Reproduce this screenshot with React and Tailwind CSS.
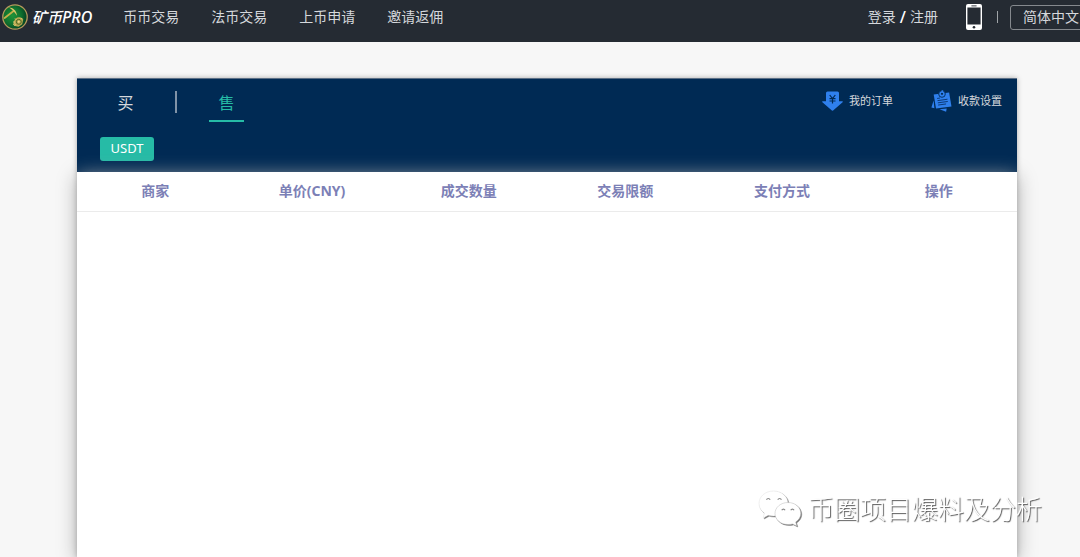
import React, { useState } from "react";

const NAV = ["币币交易", "法币交易", "上币申请", "邀请返佣"];
const COLUMNS = ["商家", "单价(CNY)", "成交数量", "交易限额", "支付方式", "操作"];

function CoinLogo() {
  return (
    <svg viewBox="0 0 26 26" className="size-[26px] shrink-0" aria-hidden="true">
      <defs>
        <radialGradient id="coin" cx="40%" cy="45%" r="60%">
          <stop offset="0" stopColor="#1f9439" />
          <stop offset="0.6" stopColor="#0f702e" />
          <stop offset="1" stopColor="#064023" />
        </radialGradient>
      </defs>
      <circle cx="13" cy="13" r="12.2" fill="url(#coin)" stroke="#b59a5c" strokeWidth="1.3" />
      <path d="M2.6 14 11.600 7" stroke="#c3b04a" strokeWidth="1.8" strokeLinecap="round" />
      <path d="M7 3.600C11 3.800 14.600 6.400 15 11.800 13 8.600 10.400 6 7 3.600Z" fill="#d8c66a" />
      <path d="M12 21.800c-1.200-4 .8-8 4.600-8.500 2.400-.3 4 .7 4.600 2.200l-1 4.700-3.700 2.600Z" fill="#b9a850" />
      <circle cx="16.800" cy="17.800" r="2.500" fill="none" stroke="#4c6a28" strokeWidth="1" />
      <circle cx="16.800" cy="17.800" r="1" fill="#e6d88a" />
      <path d="m13 14.500 1.200 1.200M19.600 14l-.8 1.300M11 18h2M12.500 21.500l1.500-1M11 20.500l1.500-.8" stroke="#e0cf7c" strokeWidth=".9" />
    </svg>
  );
}

function PhoneIcon() {
  return (
    <svg viewBox="0 0 16 26" className="h-[26px] w-4" aria-hidden="true">
      <path
        fillRule="evenodd"
        fill="#fff"
        d="M2 0h12a2 2 0 0 1 2 2v22a2 2 0 0 1-2 2H2a2 2 0 0 1-2-2V2a2 2 0 0 1 2-2Zm-.6 3.6v17h13.2v-17Z"
      />
      <path d="M5.8 1.9h4.4" stroke="#252b33" strokeWidth=".9" strokeLinecap="round" />
      <circle cx="8" cy="23.2" r="1.3" fill="#252b33" />
    </svg>
  );
}

function OrderIcon() {
  return (
    <svg viewBox="0 0 21 20" className="h-5 w-[21px]" aria-hidden="true">
      <path
        fill="#2f80ed"
        d="M5.500.5h10a1.500 1.500 0 0 1 1.500 1.500v8.200h3.100c.7 0 .9.6.5 1l-8.900 7.900c-.8.7-1.600.7-2.400 0L.4 11.200c-.4-.4-.2-1 .5-1H4V2A1.500 1.500 0 0 1 5.500.5Z"
      />
      <path d="m7.700 4 2.800 3.600L13.300 4M7.500 7.700h6M7.500 10h6M10.500 7.500v5" fill="none" stroke="#002a54" strokeWidth="1.200" />
    </svg>
  );
}

function NotesIcon() {
  return (
    <svg viewBox="0 0 21 22" className="h-[22px] w-[21px]" aria-hidden="true">
      <path fill="#2f80ed" d="M2.600 10.500 3.400 18.200.4 17.500ZM8.500 19.300l7.200-.9-.6 3.400Z" />
      <path fill="#2f80ed" d="m2.700 4.600 15.400-2.100L20.500 16.400 5 18.600Z" />
      <path d="M6.500 8.400 8.600 8.100M6.900 10.600l9.200-1.300M7.200 12.800l9.200-1.300M7.500 15l7.200-1" stroke="#0b3a78" strokeWidth="1" strokeLinecap="round" />
      <circle cx="11" cy="4" r="3.300" fill="#2f80ed" stroke="#002a54" strokeWidth=".9" />
      <circle cx="11" cy="3.800" r="1.100" fill="#002a54" />
      <path d="M10.600.3h1.600v2.200h-1.600Z" fill="#2f80ed" />
    </svg>
  );
}

function ChatBubbles() {
  return (
    <svg
      viewBox="0 0 44 38"
      className="h-[38px] w-11 overflow-visible drop-shadow-[1px_1px_0px_#777777]"
      aria-hidden="true"
    >
      <g fill="#fff" stroke="#d8d8d8" strokeWidth=".4">
        <path d="M15.500 1C7.300 1 1 6.500 1 13.500c0 4 2 7.300 5.300 9.600L5.200 28l5-2.700c1.700.5 3.500.7 5.300.7C23.700 26 30 20.500 30 13.500S23.700 1 15.500 1Z" />
        <path stroke="#a8a8a8" d="M30 12.500c-7.300 0-13 4.900-13 11s5.700 11 13 11c1.600 0 3.100-.2 4.500-.6L38.800 36l-1.100-4c3.100-2 5.100-5.100 5.100-8.500 0-6.100-5.500-11-12.800-11Z" />
      </g>
      <g fill="none" stroke="#8a8a8a" strokeWidth="1.200">
        <path d="M8.500 9.800a1.900 1.900 0 0 1 3.600 0M19.800 9.800a1.900 1.900 0 0 1 3.600 0M23.800 20.300a1.700 1.700 0 0 1 3.200 0M32.800 20.300a1.700 1.700 0 0 1 3.200 0" />
      </g>
    </svg>
  );
}

function Header() {
  return (
    <header className="flex h-[42px] shrink-0 items-start overflow-hidden bg-[#252b33] pl-0.5 text-sm whitespace-nowrap text-[#d5d8dc]">
      <a href="#home" className="flex h-[34px] items-center gap-1">
        <CoinLogo />
        <span className="text-[15px] font-medium text-white italic">
          矿币<span className="text-base">PRO</span>
        </span>
      </a>
      <nav className="ml-[31px] flex h-[34px] items-center gap-8">
        {NAV.map((item) => (
          <a key={item} href="#trade">{item}</a>
        ))}
      </nav>
      <div className="ml-auto flex h-[34px] shrink-0 items-center">
        <div className="flex gap-1">
          <a href="#login">登录</a>
          <span className="text-base leading-5 font-medium text-white">/</span>
          <a href="#register">注册</a>
        </div>
        <a href="#app" aria-label="App" className="ml-7">
          <PhoneIcon />
        </a>
        <span className="ml-[15px] h-3 w-px bg-[#a0a4a8]" />
        <select
          aria-label="语言"
          className="-mr-3 ml-3 h-[25px] w-[82px] appearance-none rounded-[3px] border border-[#85898e] bg-[#252b33] pl-3 text-sm leading-5"
        >
          <option>简体中文</option>
          <option>English</option>
        </select>
      </div>
    </header>
  );
}

function Toolbar() {
  const [side, setSide] = useState("售");
  return (
    <div className="h-[94px] border-t border-[#5b6f86] bg-[#002a54] pr-[15px] pl-[23px]">
      <div className="flex items-start justify-between">
        <div className="flex items-start pt-3" role="tablist">
          {["买", "售"].map((name, i) => (
            <React.Fragment key={name}>
              {i > 0 && <span className="mx-8 h-[22px] w-0.5 bg-[#8093a8]" />}
              <button
                type="button"
                role="tab"
                aria-selected={side === name}
                onClick={() => setSide(name)}
                className={
                  (i === 0 ? "ml-2 " : "") +
                  (side === name
                    ? "h-[31px] w-[35px] border-b-2 border-[#26bba6] pb-1.5 text-base leading-6 text-[#26bba6]"
                    : "h-[31px] w-[35px] border-b-2 border-transparent pb-1.5 text-base leading-6 text-[#d5d8dc]")
                }
              >
                {name}
              </button>
            </React.Fragment>
          ))}
        </div>
        <div className="flex gap-[38px] pt-[11px] text-[11px] text-[#d5d8dc]">
          <a href="#orders" className="flex h-[22px] items-center gap-1.5">
            <OrderIcon />
            我的订单
          </a>
          <a href="#payment" className="flex h-[22px] items-center gap-1.5">
            <NotesIcon />
            收款设置
          </a>
        </div>
      </div>
      <button type="button" className="mt-[15px] flex h-6 w-[54px] items-center justify-center rounded-[3px] bg-[#26bba6] text-[13px] text-white">
        USDT
      </button>
    </div>
  );
}

export default function App() {
  return (
    <div className="flex min-h-screen flex-col overflow-hidden bg-[#f7f7f7] font-['Noto_Sans','Noto_Sans_CJK_SC',sans-serif]">
      <Header />
      <main className="mt-9 mr-[63px] ml-[77px] flex grow flex-col shadow-[0_0_5px_#aaaaaa]">
        <Toolbar />
        <div className="relative grow bg-white shadow-[0_4px_18px_#aaaaaa]">
          <table className="w-full table-fixed text-sm">
            <thead>
              <tr className="h-[39px] border-b border-[#ebebeb] text-[#7c80b6]">
                {COLUMNS.map((c) => (
                  <th key={c} scope="col" className="font-bold">{c}</th>
                ))}
              </tr>
            </thead>
            <tbody />
          </table>
        </div>
      </main>
      <div className="pointer-events-none fixed right-[38px] bottom-7 flex items-center gap-1.5">
        <ChatBubbles />
        <span className="text-[26px] leading-10 font-light text-white [text-shadow:1px_1px_1px_#555555]">
          币圈项目爆料及分析
        </span>
      </div>
    </div>
  );
}
